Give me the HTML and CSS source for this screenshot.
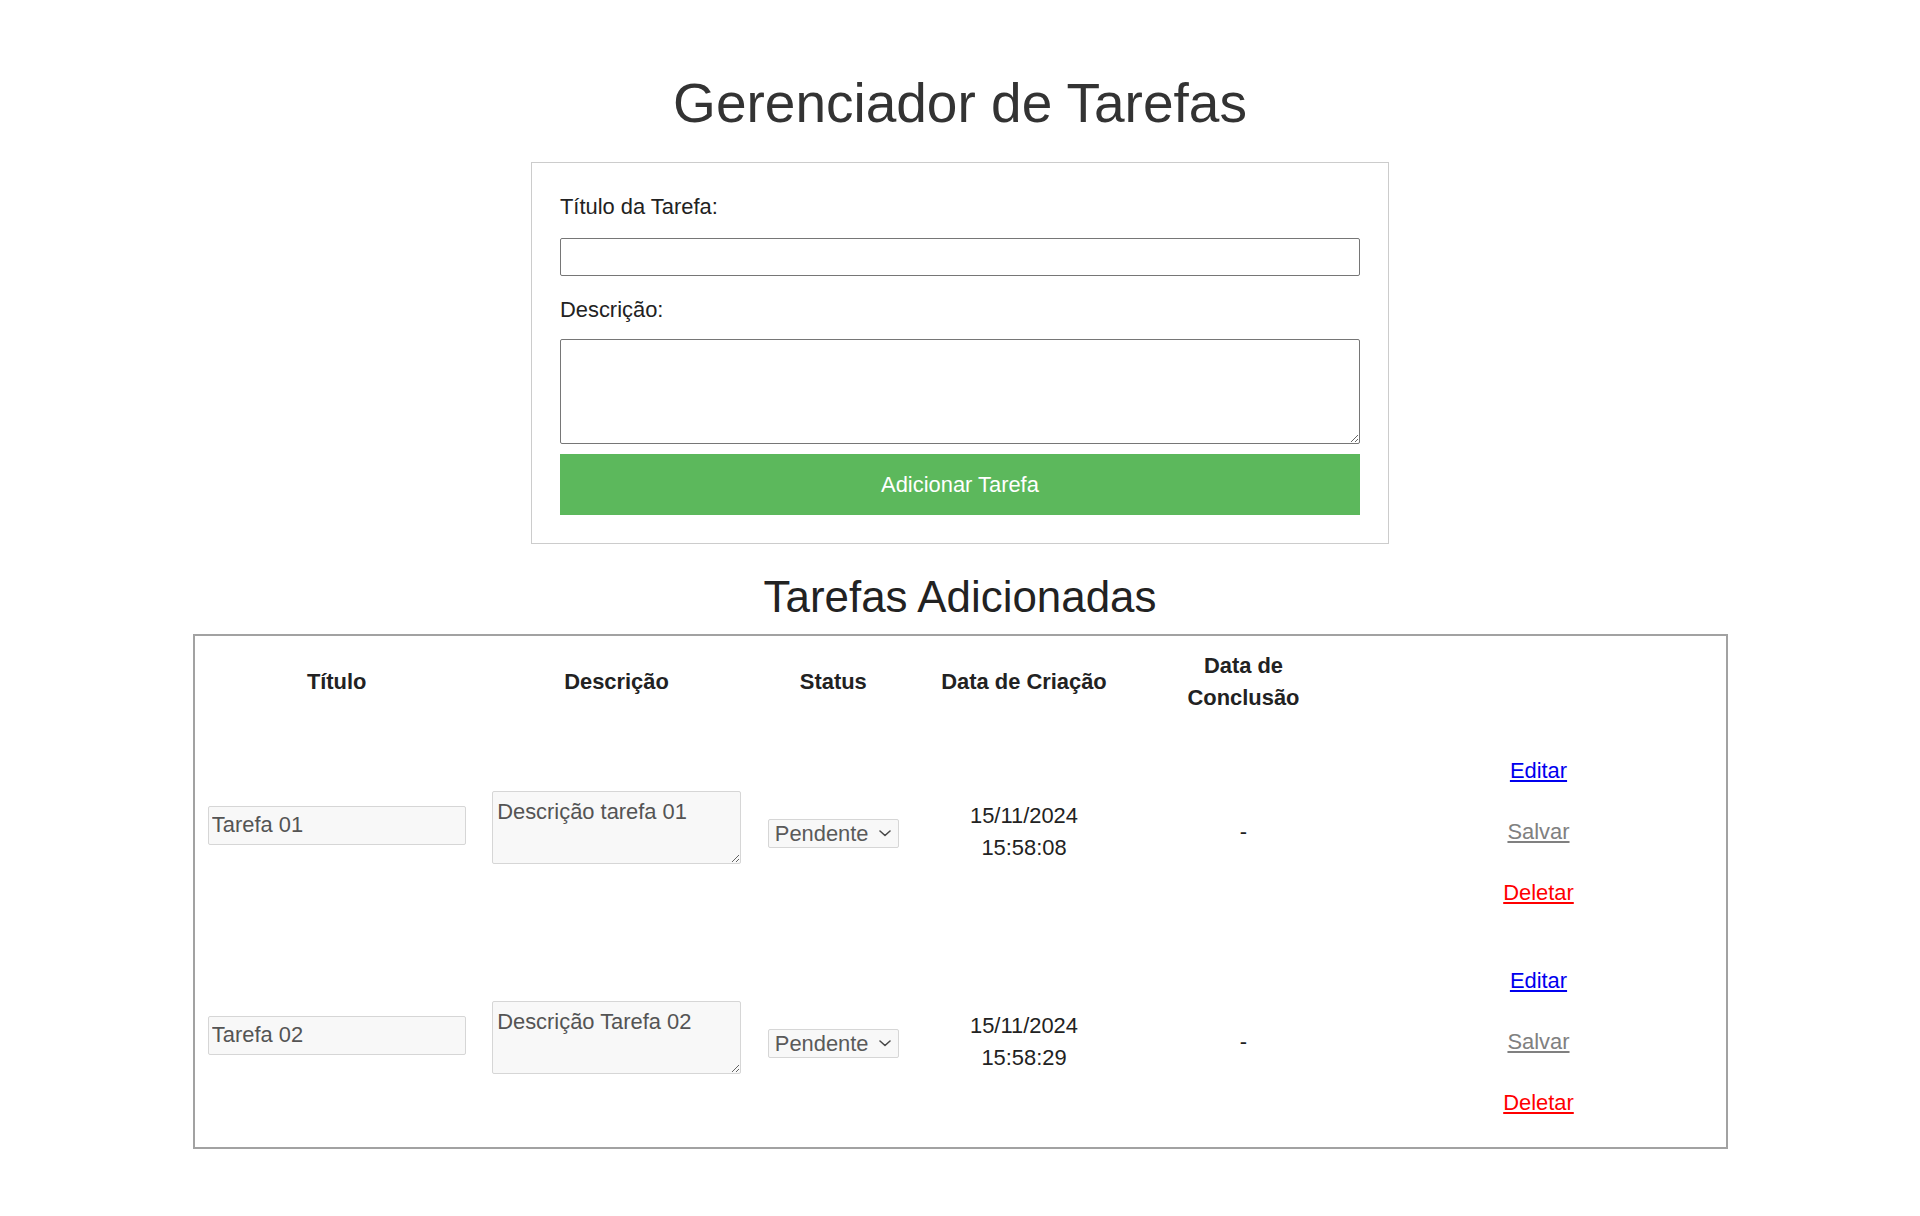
FILE: index.html
```html
<!DOCTYPE html>
<html lang="pt-BR">
<head>
<meta charset="utf-8">
<title>Gerenciador de Tarefas</title>
<link rel="stylesheet" href="styles.css">
</head>
<body>
<main class="page">
  <h1 class="page-title">Gerenciador de Tarefas</h1>

  <form class="task-form">
    <label class="field-label" for="titulo">Título da Tarefa:</label>
    <input class="field-input" id="titulo" type="text">
    <label class="field-label field-label--desc" for="descricao">Descrição:</label>
    <textarea class="field-textarea" id="descricao"></textarea>
    <button class="add-button" type="button">Adicionar Tarefa</button>
  </form>

  <h2 class="section-title">Tarefas Adicionadas</h2>

  <div class="table-box">
    <table class="task-table">
      <colgroup>
        <col class="col-title">
        <col class="col-desc">
        <col class="col-status">
        <col class="col-created">
        <col class="col-done">
        <col class="col-actions">
      </colgroup>
      <thead>
        <tr>
          <th>Título</th>
          <th>Descrição</th>
          <th>Status</th>
          <th>Data de Criação</th>
          <th>Data de Conclusão</th>
          <th></th>
        </tr>
      </thead>
      <tbody>
        <tr>
          <td><input class="cell-input" type="text" value="Tarefa 01" readonly></td>
          <td><textarea class="cell-textarea" readonly>Descrição tarefa 01</textarea></td>
          <td>
            <span class="select-wrap">
              <select class="cell-select"><option>Pendente</option><option>Concluída</option></select>
              <svg class="select-chevron" viewBox="0 0 12 7" aria-hidden="true"><path d="M1 1 L6 5.5 L11 1" fill="none" stroke="#4a4a4a" stroke-width="1.6" stroke-linecap="round" stroke-linejoin="round"/></svg>
            </span>
          </td>
          <td>15/11/2024<br>15:58:08</td>
          <td>-</td>
          <td>
            <div class="actions">
              <a class="action-link action-link--edit" href="#">Editar</a>
              <a class="action-link action-link--save" href="#">Salvar</a>
              <a class="action-link action-link--delete" href="#">Deletar</a>
            </div>
          </td>
        </tr>
        <tr>
          <td><input class="cell-input" type="text" value="Tarefa 02" readonly></td>
          <td><textarea class="cell-textarea" readonly>Descrição Tarefa 02</textarea></td>
          <td>
            <span class="select-wrap">
              <select class="cell-select"><option>Pendente</option><option>Concluída</option></select>
              <svg class="select-chevron" viewBox="0 0 12 7" aria-hidden="true"><path d="M1 1 L6 5.5 L11 1" fill="none" stroke="#4a4a4a" stroke-width="1.6" stroke-linecap="round" stroke-linejoin="round"/></svg>
            </span>
          </td>
          <td>15/11/2024<br>15:58:29</td>
          <td>-</td>
          <td>
            <div class="actions">
              <a class="action-link action-link--edit" href="#">Editar</a>
              <a class="action-link action-link--save" href="#">Salvar</a>
              <a class="action-link action-link--delete" href="#">Deletar</a>
            </div>
          </td>
        </tr>
      </tbody>
    </table>
  </div>
</main>
</body>
</html>
```
FILE: styles.css
```css
* {
  box-sizing: border-box;
}

html,
body {
  margin: 0;
  background: #ffffff;
}

body {
  font-family: "Liberation Sans", Arial, sans-serif;
  font-size: 21.9px;
  line-height: 32px;
  color: #222222;
}

.page {
  padding: 72px 0 40px;
}

.page-title {
  margin: 0 0 28px;
  font-size: 55px;
  line-height: 62px;
  font-weight: normal;
  color: #333333;
  text-align: center;
}

/* ---------- form ---------- */

.task-form {
  width: 858px;
  margin: 0 auto;
  padding: 28px;
  border: 1px solid #cccccc;
}

.field-label {
  display: block;
  margin-bottom: 15px;
}

.field-label--desc {
  margin-bottom: 13px;
}

.field-input {
  display: block;
  width: 100%;
  height: 38px;
  margin: 0 0 18px;
  padding: 0 4px;
  border: 1px solid #767676;
  border-radius: 2px;
  background: #ffffff;
  font: inherit;
  color: #222222;
}

.field-textarea {
  display: block;
  width: 100%;
  height: 105px;
  margin: 0 0 10px;
  padding: 4px;
  border: 1px solid #767676;
  border-radius: 2px;
  background: #ffffff;
  font: inherit;
  resize: vertical;
}

.add-button {
  display: block;
  width: 100%;
  height: 61px;
  padding: 0;
  border: 0;
  background: #5cb85c;
  color: #ffffff;
  font: inherit;
  line-height: 32px;
  cursor: pointer;
}

/* ---------- list ---------- */

.section-title {
  margin: 28px 0 13px;
  font-size: 43.9px;
  line-height: 49px;
  font-weight: normal;
  color: #222222;
  text-align: center;
}

.table-box {
  width: 1535px;
  margin: 0 auto;
  border: 2px solid #a2a2a2;
}

.task-table {
  width: 100%;
  table-layout: fixed;
  border-collapse: separate;
  border-spacing: 0;
}

.col-title { width: 284.33px; }
.col-desc { width: 275.33px; }
.col-status { width: 158.33px; }
.col-created { width: 223px; }
.col-done { width: 216px; }
.col-actions { width: auto; }

.task-table th,
.task-table td {
  padding: 13.5px 13.33px;
  text-align: center;
  vertical-align: middle;
}

.task-table th {
  font-weight: bold;
}

.task-table td {
  padding: 14px 13.33px;
}

.cell-input {
  display: block;
  width: 100%;
  height: 39px;
  margin: 0 0 14px;
  padding: 0 3px;
  border: 1px solid #d6d6d6;
  border-radius: 2px;
  background: #f8f8f8;
  color: #545454;
  font: inherit;
  line-height: normal;
}

.cell-textarea {
  display: block;
  width: 100%;
  height: 73px;
  margin: 0 0 10px;
  padding: 7px 4px;
  border: 1px solid #d6d6d6;
  border-radius: 2px;
  background: #f8f8f8;
  color: #545454;
  font: inherit;
  line-height: normal;
  resize: both;
}

.select-wrap {
  position: relative;
  display: inline-block;
  vertical-align: middle;
}

.cell-select {
  -webkit-appearance: none;
  appearance: none;
  display: block;
  width: 131px;
  height: 29px;
  padding: 0 28px 0 6px;
  border: 1px solid #d6d6d6;
  border-radius: 2px;
  background: #f8f8f8;
  color: #5a5a5a;
  font: inherit;
  line-height: 27px;
}

.select-chevron {
  position: absolute;
  right: 8px;
  top: 50%;
  width: 12px;
  height: 7px;
  margin-top: -3px;
  pointer-events: none;
}

.actions {
  display: flex;
  flex-direction: column;
  align-items: center;
  gap: 29px;
  padding: 14px 0;
}

.action-link {
  text-decoration: underline;
}

.action-link--edit { color: #0000ee; }
.action-link--save { color: #808080; }
.action-link--delete { color: #ff0000; }
```
